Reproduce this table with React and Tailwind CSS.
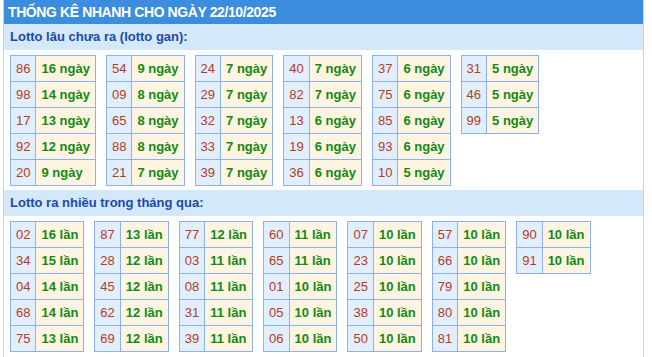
const ganCols = [
  [["86", 16], ["98", 14], ["17", 13], ["92", 12], ["20", 9]],
  [["54", 9], ["09", 8], ["65", 8], ["88", 8], ["21", 7]],
  [["24", 7], ["29", 7], ["32", 7], ["33", 7], ["39", 7]],
  [["40", 7], ["82", 7], ["13", 6], ["19", 6], ["36", 6]],
  [["37", 6], ["75", 6], ["85", 6], ["93", 6], ["10", 5]],
  [["31", 5], ["46", 5], ["99", 5]],
];

const hotCols = [
  [["02", 16], ["34", 15], ["04", 14], ["68", 14], ["75", 13]],
  [["87", 13], ["28", 12], ["45", 12], ["62", 12], ["69", 12]],
  [["77", 12], ["03", 11], ["08", 11], ["31", 11], ["39", 11]],
  [["60", 11], ["65", 11], ["01", 10], ["05", 10], ["06", 10]],
  [["07", 10], ["23", 10], ["25", 10], ["38", 10], ["50", 10]],
  [["57", 10], ["66", 10], ["79", 10], ["80", 10], ["81", 10]],
  [["90", 10], ["91", 10]],
];

const LottoTable = ({ rows, unit }) => {
  return (
    <table className="border-collapse border border-[#8fb0ef]">
      <tbody>
        {rows.map(([num, count]) => (
          <tr key={num}>
            <td className="border border-[#8fb0ef] bg-[#e1eefd] px-[5px] py-[5px] text-center leading-[15px] text-[#b63b1c]">
              {num}
            </td>
            <td className="border border-[#8fb0ef] bg-[#fef4e2] px-[5px] py-[5px] text-left font-bold leading-[15px] text-[#128a12] whitespace-nowrap">
              {count} {unit}
            </td>
          </tr>
        ))}
      </tbody>
    </table>
  );
};

const SectionTitle = ({ children }) => {
  return (
    <div className="flex h-[26px] items-center bg-[#d4e8fc] pl-[6px] text-[13px] font-bold text-[#1c4aa8]">
      {children}
    </div>
  );
};

const App = () => {
  return (
    <div
      className="min-h-[357px] bg-white text-[13px]"
      style={{ fontFamily: '"Liberation Sans", Arial, sans-serif' }}
    >
      <div className="ml-[3px] w-[641px] min-h-[357px] border-x border-[#c5d3e6]">
        <div className="flex h-[24px] items-center bg-[#3c8ddd] pl-[4px] text-[14px] font-bold text-white tracking-[-0.4px]">
          THỐNG KÊ NHANH CHO NGÀY 22/10/2025
        </div>

        <SectionTitle>Lotto lâu chưa ra (lotto gan):</SectionTitle>
        <div className="flex items-start gap-[10px] pl-[6px] pt-[5px] pb-[4px]">
          {ganCols.map((rows, i) => (
            <LottoTable key={i} rows={rows} unit="ngày" />
          ))}
        </div>

        <SectionTitle>Lotto ra nhiều trong tháng qua:</SectionTitle>
        <div className="flex items-start gap-[10px] pl-[6px] pt-[5px] pb-[4px]">
          {hotCols.map((rows, i) => (
            <LottoTable key={i} rows={rows} unit="lần" />
          ))}
        </div>
      </div>
    </div>
  );
};

export default App;
